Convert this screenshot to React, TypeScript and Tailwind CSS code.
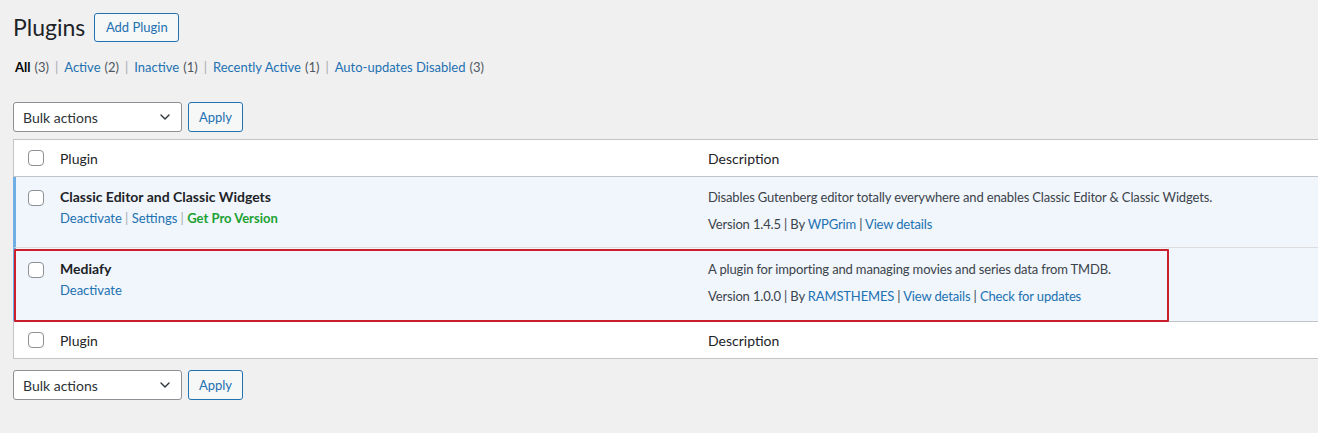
import { ChevronDown } from 'lucide-react'

const font = { fontFamily: 'Lato, "Noto Sans", sans-serif' }

const filters = [
  { label: 'All', count: 3, current: true },
  { label: 'Active', count: 2 },
  { label: 'Inactive', count: 1 },
  { label: 'Recently Active', count: 1 },
  { label: 'Auto-updates Disabled', count: 3 },
]

function Checkbox() {
  return <span className="block w-4 h-4 rounded-[4px] border border-[#8c8f94] bg-white" />
}

function BulkBar() {
  return (
    <div className="flex items-center gap-[6px]">
      <div className="w-[169px] h-[30px] flex items-center justify-between pl-[9px] pr-[8px] bg-white border border-[#8c8f94] rounded-[3px] text-[14px] text-[#2c3338]">
        <span>Bulk actions</span>
        <ChevronDown className="w-4 h-4 text-[#2c3338]" strokeWidth={2} />
      </div>
      <button className="h-[30px] w-[55px] pt-[2px] border border-[#2271b1] rounded-[3px] bg-[#f6f7f7] text-[13px] text-[#2271b1]">
        Apply
      </button>
    </div>
  )
}

function HeadRow({ top }: { top?: boolean }) {
  return (
    <div className={`flex h-[37px] items-center bg-white ${top ? 'border-b' : 'border-t'} border-[#c3c4c7]`}>
      <div className="w-[46px] pl-[14px]"><Checkbox /></div>
      <div className="w-[648px] text-[14px] text-[#1d2327]">Plugin</div>
      <div className="text-[14px] text-[#1d2327]">Description</div>
    </div>
  )
}

export default function App() {
  return (
    <div className="h-[433px] overflow-hidden bg-[#f0f0f1] pl-[13px] pt-[13px] text-[#3c434a]" style={font}>
      <div className="flex items-center gap-[9px]">
        <h1 className="text-[23px] leading-[29px] text-[#1d2327]">Plugins</h1>
        <button className="h-[29px] w-[85px] pt-[1px] border border-[#2271b1] rounded-[3px] bg-[#f6f7f7] text-[13px] text-[#2271b1]">
          Add Plugin
        </button>
      </div>

      <ul className="flex items-center mt-[16px] pl-[2px] text-[13px] leading-[18px]">
        {filters.map((f, i) => (
          <li key={f.label} className="flex items-center">
            {i > 0 && <span className="mx-[6px] text-[#a7aaad]">|</span>}
            <span className={f.current ? 'font-bold text-black' : 'text-[#2271b1]'}>{f.label}</span>
            <span className="ml-[4px] text-[#50575e]">({f.count})</span>
          </li>
        ))}
      </ul>

      <div className="mt-[26px]">
        <BulkBar />
      </div>

      <div className="relative mt-[7px] mr-[-20px] border border-[#c3c4c7] bg-white">
        <HeadRow top />

        <div className="flex h-[71px] bg-[#f0f6fc] border-l-[3px] border-[#72aee6] border-b border-b-[#dcdcde] -ml-px">
          <div className="w-[44px] pl-[12px] pt-[13px]"><Checkbox /></div>
          <div className="w-[648px] pt-[9px]">
            <div className="text-[14px] font-bold text-[#1d2327] leading-[22px]">Classic Editor and Classic Widgets</div>
            <div className="text-[13px] leading-[20px] text-[#2271b1]">
              Deactivate <span className="text-[#a7aaad]">|</span> Settings <span className="text-[#a7aaad]">|</span>{' '}
              <span className="font-bold text-[#1da133]">Get Pro Version</span>
            </div>
          </div>
          <div className="pt-[10px] text-[13px] tracking-[-0.15px] text-[#3c434a]">
            <div className="leading-[20px]">Disables Gutenberg editor totally everywhere and enables Classic Editor &amp; Classic Widgets.</div>
            <div className="mt-[7px] leading-[20px]">
              Version 1.4.5 | By <span className="text-[#2271b1]">WPGrim</span> | <span className="text-[#2271b1]">View details</span>
            </div>
          </div>
        </div>

        <div className="flex h-[73px] bg-[#f0f6fc] border-l-[3px] border-[#72aee6] -ml-px">
          <div className="w-[44px] pl-[12px] pt-[14px]"><Checkbox /></div>
          <div className="w-[648px] pt-[10px]">
            <div className="text-[14px] font-bold text-[#1d2327] leading-[22px]">Mediafy</div>
            <div className="text-[13px] leading-[20px] text-[#2271b1]">Deactivate</div>
          </div>
          <div className="pt-[11px] text-[13px] tracking-[-0.15px] text-[#3c434a]">
            <div className="leading-[20px]">A plugin for importing and managing movies and series data from TMDB.</div>
            <div className="mt-[7px] leading-[20px]">
              Version 1.0.0 | By <span className="text-[#2271b1]">RAMSTHEMES</span> | <span className="text-[#2271b1]">View details</span> |{' '}
              <span className="text-[#2271b1]">Check for updates</span>
            </div>
          </div>
        </div>

        <HeadRow />

        {/* highlight around the Mediafy row */}
        <div className="absolute left-0 top-[109px] w-[1155px] h-[73px] border-2 border-[#cc1f2c] rounded-[1px] pointer-events-none" />
      </div>

      <div className="mt-[11px]">
        <BulkBar />
      </div>
    </div>
  )
}
